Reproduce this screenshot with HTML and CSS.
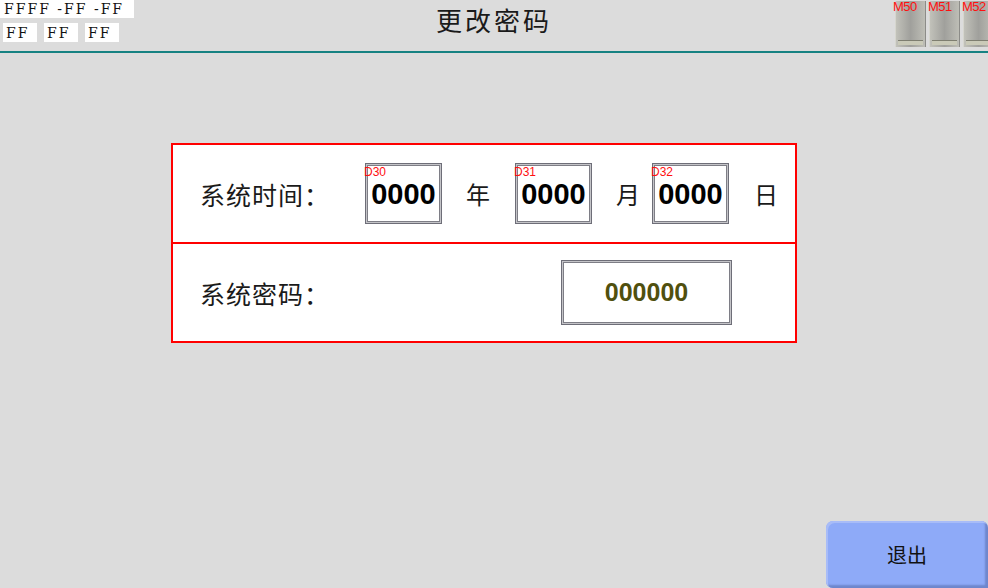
FILE: index.html
```html
<!DOCTYPE html>
<html lang="zh-CN">
<head>
    <meta charset="UTF-8">
    <meta name="viewport" content="width=device-width, initial-scale=1.0">
    <title>更改密码</title>
    <link rel="stylesheet" href="styles.css">
</head>
<body>
    <div class="screen">
        <div class="header">
            <div class="status-block">
                <div class="status-line">FFFF -FF -FF</div>
                <div class="status-row">
                    <span class="status-cell">FF</span>
                    <span class="status-cell">FF</span>
                    <span class="status-cell">FF</span>
                </div>
            </div>
            <div class="title">更改密码</div>
            <div class="switches">
                <div class="switch"><span class="tag">M50</span><span class="lip"></span></div>
                <div class="switch"><span class="tag">M51</span><span class="lip"></span></div>
                <div class="switch"><span class="tag">M52</span><span class="lip"></span></div>
            </div>
        </div>

        <div class="panel">
            <div class="panel-row">
                <span class="label">系统时间：</span>
                <div class="num-box"><span class="addr">D30</span>0000</div>
                <span class="unit">年</span>
                <div class="num-box"><span class="addr">D31</span>0000</div>
                <span class="unit unit-month">月</span>
                <div class="num-box"><span class="addr">D32</span>0000</div>
                <span class="unit unit-day">日</span>
            </div>
            <div class="panel-row">
                <span class="label">系统密码：</span>
                <div class="pass-box">000000</div>
            </div>
        </div>

        <div class="footer">
            <button class="exit-btn">退出</button>
        </div>
    </div>
</body>
</html>
```

FILE: styles.css
```css
body {
    margin: 0;
    background: #dcdcdc;
    font-family: "Noto Sans CJK SC", "Liberation Sans", sans-serif;
    overflow: hidden;
}
.screen {
    width: 988px;
    height: 588px;
    display: flex;
    flex-direction: column;
}
.header {
    height: 51px;
    border-bottom: 2px solid #168282;
    display: grid;
    grid-template-columns: 1fr auto 1fr;
    align-items: start;
}
.status-block {
    display: flex;
    flex-direction: column;
    gap: 5px;
}
.status-line {
    width: 130px;
    height: 18px;
    padding-left: 4px;
    background: #fff;
    font-family: "DejaVu Serif", serif;
    font-size: 14px;
    letter-spacing: 2px;
    line-height: 19px;
    white-space: nowrap;
    color: #111;
}
.status-row {
    display: flex;
    gap: 7px;
    padding-left: 3px;
}
.status-cell {
    width: 31px;
    height: 19px;
    padding-left: 3px;
    background: #fff;
    font-family: "DejaVu Serif", serif;
    font-size: 14px;
    letter-spacing: 2px;
    line-height: 20px;
    color: #111;
}
.title {
    padding-top: 5px;
    font-size: 26px;
    line-height: 30px;
    letter-spacing: 3px;
    color: #1a1a1a;
}
.switches {
    justify-self: end;
    display: flex;
    gap: 3px;
    width: 95px;
    overflow: hidden;
}
.switch {
    position: relative;
    flex: 0 0 31px;
    height: 46px;
    margin-top: 1px;
    background: linear-gradient(to right, #c4c4bc, #a0a09c 50%, #c0c0b8);
    box-shadow: inset 1px 0 0 #d6d6ce, inset -1px 0 0 #8c8c88;
}
.switch:first-child {
    margin-left: 2px;
}
.switch .lip {
    position: absolute;
    left: 3px;
    right: 3px;
    bottom: 2px;
    height: 4px;
    background: #cacab8;
    border-top: 1px solid #7e7e70;
}
.switch .tag {
    position: absolute;
    left: -1px;
    top: 0;
    font-family: "Liberation Sans", sans-serif;
    font-size: 13px;
    letter-spacing: -0.5px;
    color: #ff1010;
    line-height: 12px;
}
.switch:first-child .tag {
    left: -2px;
}
.panel {
    margin: 90px 0 0 171px;
    width: 622px;
    border: 2px solid #ff0000;
    background: #fff;
}
.panel-row {
    height: 97px;
    display: flex;
    align-items: center;
    padding-left: 27px;
}
.panel-row > * {
    flex: none;
}
.panel-row + .panel-row {
    border-top: 2px solid #ff0000;
}
.label {
    width: 165px;
    font-size: 25px;
    letter-spacing: 1px;
    color: #1a1a1a;
}
.unit {
    margin: 0 25px 0 24px;
    font-size: 24px;
    color: #1a1a1a;
}
.unit-month {
    margin-right: 12px;
}
.unit-day {
    margin-left: 25px;
}
.num-box {
    position: relative;
    width: 71px;
    border: 1px solid #6e6e78;
    box-shadow: inset 0 0 0 1px #c4c4c8, inset 0 0 0 2px #7e7e86;
    padding: 4px 2px 2px;
    height: 53px;
    display: flex;
    align-items: center;
    justify-content: center;
    font-family: "Liberation Sans", sans-serif;
    font-weight: bold;
    font-size: 29px;
    color: #000;
    box-sizing: content-box;
}
.addr {
    position: absolute;
    left: -2px;
    top: 2px;
    font-family: "Liberation Sans", sans-serif;
    font-weight: normal;
    font-size: 12px;
    line-height: 12px;
    color: #ff1010;
}
.pass-box {
    margin-left: 196px;
    width: 165px;
    height: 59px;
    border: 1px solid #6e6e78;
    box-shadow: inset 0 0 0 1px #c4c4c8, inset 0 0 0 2px #7e7e86;
    padding: 2px;
    display: flex;
    align-items: center;
    justify-content: center;
    font-family: "Liberation Sans", sans-serif;
    font-weight: bold;
    font-size: 25px;
    color: #50500e;
    box-sizing: content-box;
}
.footer {
    margin-top: auto;
    display: flex;
    justify-content: flex-end;
}
.exit-btn {
    width: 162px;
    height: 67px;
    border: none;
    border-radius: 7px 7px 0 7px;
    background: #8eaaf8;
    box-shadow: inset 2px 2px 0 #a8bcf8, inset -3px -3px 2px #6e86cc;
    font-family: "Noto Sans CJK SC", sans-serif;
    font-size: 20px;
    color: #111;
    cursor: pointer;
}
```
